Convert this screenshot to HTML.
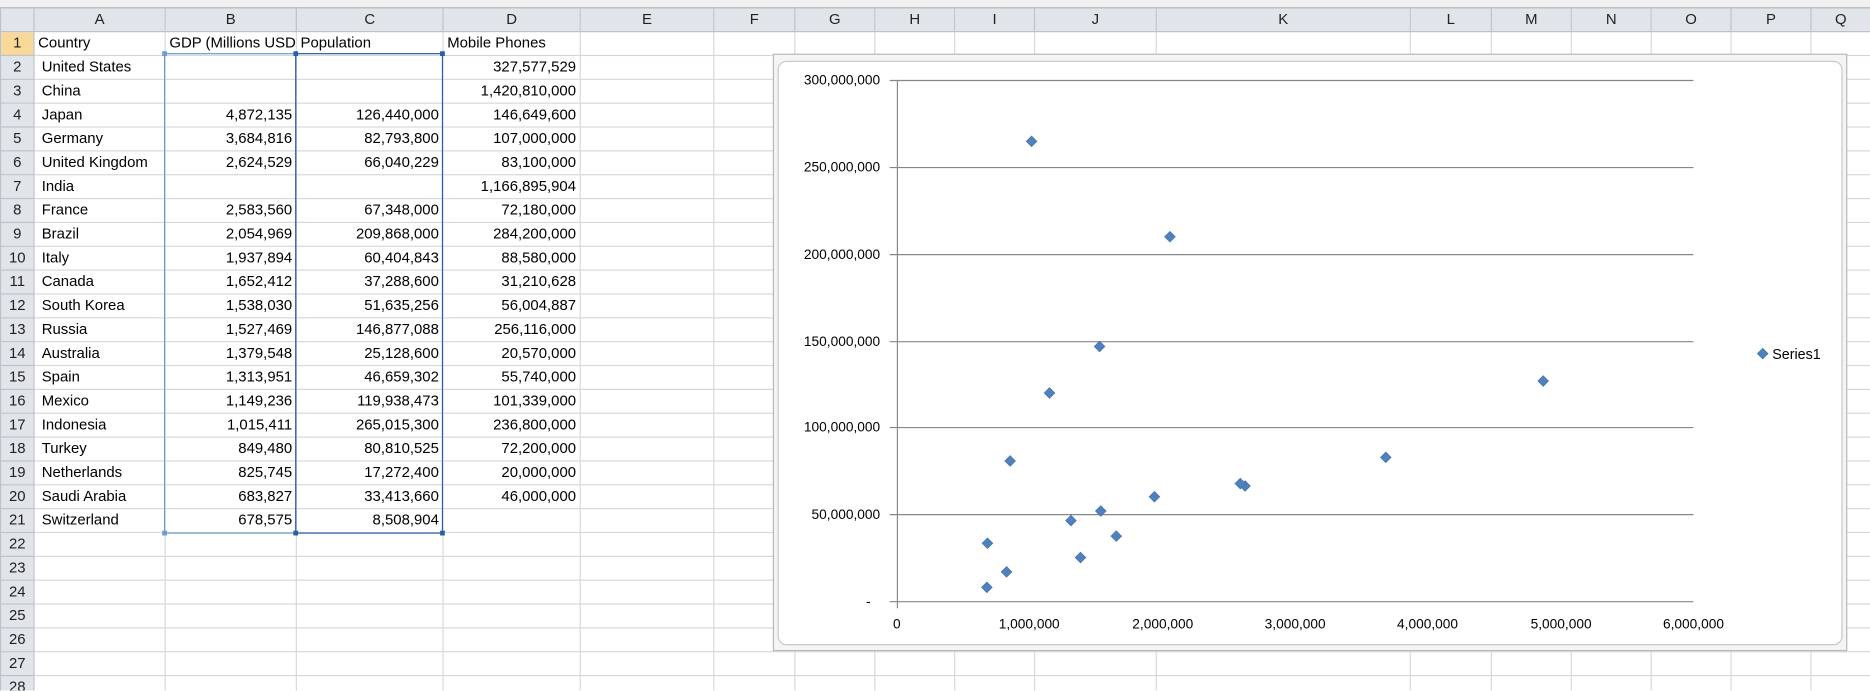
<!DOCTYPE html>
<html><head><meta charset="utf-8"><style>
html,body{margin:0;padding:0;width:1870px;height:690px;overflow:hidden;background:#fff}
#s{position:absolute;left:0;top:0;width:1568px;height:579px;overflow:hidden;transform:scale(1.19260);transform-origin:0 0;font-family:"Liberation Sans",sans-serif;font-size:12.5px;color:#000}
#top{position:absolute;left:0;top:0;width:1568px;height:6px;background:#f0f0f0;border-bottom:1px solid #9aa3ad}
table{position:absolute;left:0;top:6px;border-collapse:collapse;table-layout:fixed;width:1568px}
td{border:1px solid #d8d8d8;height:20px;padding:0 3px;white-space:nowrap;overflow:hidden;line-height:19px;box-sizing:border-box}
tr.h td{background:#e1e5ea;border-color:#bcc2c9;text-align:center;height:19px;color:#222}
td.r{background:#e1e5ea;border-color:#bcc2c9;text-align:center;color:#222;padding:0}
td.n{text-align:right}
td.a{padding-left:6px}
</style></head><body><div id="s">
<div id="top"></div>
<table>
<colgroup><col style="width:28px"><col style="width:110px"><col style="width:110px"><col style="width:123px"><col style="width:115px"><col style="width:112px"><col style="width:68px"><col style="width:67px"><col style="width:67px"><col style="width:67px"><col style="width:102px"><col style="width:213px"><col style="width:68px"><col style="width:67px"><col style="width:67px"><col style="width:67px"><col style="width:67px"><col style="width:50px"></colgroup>
<tr class="h"><td></td><td>A</td><td>B</td><td>C</td><td>D</td><td>E</td><td>F</td><td>G</td><td>H</td><td>I</td><td>J</td><td>K</td><td>L</td><td>M</td><td>N</td><td>O</td><td>P</td><td>Q</td></tr>
<tr><td class="r" style="background:#f9d99a">1</td><td>Country</td><td style="overflow:hidden">GDP (Millions USD</td><td>Population</td><td>Mobile Phones</td><td></td><td></td><td></td><td></td><td></td><td></td><td></td><td></td><td></td><td></td><td></td><td></td><td></td></tr>
<tr><td class="r">2</td><td class="a">United States</td><td></td><td></td><td class="n">327,577,529</td><td></td><td></td><td></td><td></td><td></td><td></td><td></td><td></td><td></td><td></td><td></td><td></td><td></td></tr>
<tr><td class="r">3</td><td class="a">China</td><td></td><td></td><td class="n">1,420,810,000</td><td></td><td></td><td></td><td></td><td></td><td></td><td></td><td></td><td></td><td></td><td></td><td></td><td></td></tr>
<tr><td class="r">4</td><td class="a">Japan</td><td class="n">4,872,135</td><td class="n">126,440,000</td><td class="n">146,649,600</td><td></td><td></td><td></td><td></td><td></td><td></td><td></td><td></td><td></td><td></td><td></td><td></td><td></td></tr>
<tr><td class="r">5</td><td class="a">Germany</td><td class="n">3,684,816</td><td class="n">82,793,800</td><td class="n">107,000,000</td><td></td><td></td><td></td><td></td><td></td><td></td><td></td><td></td><td></td><td></td><td></td><td></td><td></td></tr>
<tr><td class="r">6</td><td class="a">United Kingdom</td><td class="n">2,624,529</td><td class="n">66,040,229</td><td class="n">83,100,000</td><td></td><td></td><td></td><td></td><td></td><td></td><td></td><td></td><td></td><td></td><td></td><td></td><td></td></tr>
<tr><td class="r">7</td><td class="a">India</td><td></td><td></td><td class="n">1,166,895,904</td><td></td><td></td><td></td><td></td><td></td><td></td><td></td><td></td><td></td><td></td><td></td><td></td><td></td></tr>
<tr><td class="r">8</td><td class="a">France</td><td class="n">2,583,560</td><td class="n">67,348,000</td><td class="n">72,180,000</td><td></td><td></td><td></td><td></td><td></td><td></td><td></td><td></td><td></td><td></td><td></td><td></td><td></td></tr>
<tr><td class="r">9</td><td class="a">Brazil</td><td class="n">2,054,969</td><td class="n">209,868,000</td><td class="n">284,200,000</td><td></td><td></td><td></td><td></td><td></td><td></td><td></td><td></td><td></td><td></td><td></td><td></td><td></td></tr>
<tr><td class="r">10</td><td class="a">Italy</td><td class="n">1,937,894</td><td class="n">60,404,843</td><td class="n">88,580,000</td><td></td><td></td><td></td><td></td><td></td><td></td><td></td><td></td><td></td><td></td><td></td><td></td><td></td></tr>
<tr><td class="r">11</td><td class="a">Canada</td><td class="n">1,652,412</td><td class="n">37,288,600</td><td class="n">31,210,628</td><td></td><td></td><td></td><td></td><td></td><td></td><td></td><td></td><td></td><td></td><td></td><td></td><td></td></tr>
<tr><td class="r">12</td><td class="a">South Korea</td><td class="n">1,538,030</td><td class="n">51,635,256</td><td class="n">56,004,887</td><td></td><td></td><td></td><td></td><td></td><td></td><td></td><td></td><td></td><td></td><td></td><td></td><td></td></tr>
<tr><td class="r">13</td><td class="a">Russia</td><td class="n">1,527,469</td><td class="n">146,877,088</td><td class="n">256,116,000</td><td></td><td></td><td></td><td></td><td></td><td></td><td></td><td></td><td></td><td></td><td></td><td></td><td></td></tr>
<tr><td class="r">14</td><td class="a">Australia</td><td class="n">1,379,548</td><td class="n">25,128,600</td><td class="n">20,570,000</td><td></td><td></td><td></td><td></td><td></td><td></td><td></td><td></td><td></td><td></td><td></td><td></td><td></td></tr>
<tr><td class="r">15</td><td class="a">Spain</td><td class="n">1,313,951</td><td class="n">46,659,302</td><td class="n">55,740,000</td><td></td><td></td><td></td><td></td><td></td><td></td><td></td><td></td><td></td><td></td><td></td><td></td><td></td></tr>
<tr><td class="r">16</td><td class="a">Mexico</td><td class="n">1,149,236</td><td class="n">119,938,473</td><td class="n">101,339,000</td><td></td><td></td><td></td><td></td><td></td><td></td><td></td><td></td><td></td><td></td><td></td><td></td><td></td></tr>
<tr><td class="r">17</td><td class="a">Indonesia</td><td class="n">1,015,411</td><td class="n">265,015,300</td><td class="n">236,800,000</td><td></td><td></td><td></td><td></td><td></td><td></td><td></td><td></td><td></td><td></td><td></td><td></td><td></td></tr>
<tr><td class="r">18</td><td class="a">Turkey</td><td class="n">849,480</td><td class="n">80,810,525</td><td class="n">72,200,000</td><td></td><td></td><td></td><td></td><td></td><td></td><td></td><td></td><td></td><td></td><td></td><td></td><td></td></tr>
<tr><td class="r">19</td><td class="a">Netherlands</td><td class="n">825,745</td><td class="n">17,272,400</td><td class="n">20,000,000</td><td></td><td></td><td></td><td></td><td></td><td></td><td></td><td></td><td></td><td></td><td></td><td></td><td></td></tr>
<tr><td class="r">20</td><td class="a">Saudi Arabia</td><td class="n">683,827</td><td class="n">33,413,660</td><td class="n">46,000,000</td><td></td><td></td><td></td><td></td><td></td><td></td><td></td><td></td><td></td><td></td><td></td><td></td><td></td></tr>
<tr><td class="r">21</td><td class="a">Switzerland</td><td class="n">678,575</td><td class="n">8,508,904</td><td></td><td></td><td></td><td></td><td></td><td></td><td></td><td></td><td></td><td></td><td></td><td></td><td></td><td></td></tr>
<tr><td class="r">22</td><td></td><td></td><td></td><td></td><td></td><td></td><td></td><td></td><td></td><td></td><td></td><td></td><td></td><td></td><td></td><td></td><td></td></tr>
<tr><td class="r">23</td><td></td><td></td><td></td><td></td><td></td><td></td><td></td><td></td><td></td><td></td><td></td><td></td><td></td><td></td><td></td><td></td><td></td></tr>
<tr><td class="r">24</td><td></td><td></td><td></td><td></td><td></td><td></td><td></td><td></td><td></td><td></td><td></td><td></td><td></td><td></td><td></td><td></td><td></td></tr>
<tr><td class="r">25</td><td></td><td></td><td></td><td></td><td></td><td></td><td></td><td></td><td></td><td></td><td></td><td></td><td></td><td></td><td></td><td></td><td></td></tr>
<tr><td class="r">26</td><td></td><td></td><td></td><td></td><td></td><td></td><td></td><td></td><td></td><td></td><td></td><td></td><td></td><td></td><td></td><td></td><td></td></tr>
<tr><td class="r">27</td><td></td><td></td><td></td><td></td><td></td><td></td><td></td><td></td><td></td><td></td><td></td><td></td><td></td><td></td><td></td><td></td><td></td></tr>
<tr><td class="r">28</td><td></td><td></td><td></td><td></td><td></td><td></td><td></td><td></td><td></td><td></td><td></td><td></td><td></td><td></td><td></td><td></td><td></td></tr>
</table>
<svg style="position:absolute;left:0;top:0" width="1568" height="579">
<rect x="138" y="45" width="110" height="402" fill="none" stroke="#6f9bd1" stroke-width="1"/>
<rect x="248" y="45" width="123" height="402" fill="none" stroke="#2a5ea8" stroke-width="1"/>
<g fill="#2a5ea8"><rect x="136" y="43" width="4" height="4" fill="#6f9bd1"/><rect x="246" y="43" width="4" height="4"/><rect x="369" y="43" width="4" height="4"/><rect x="136" y="445" width="4" height="4" fill="#6f9bd1"/><rect x="246" y="445" width="4" height="4"/><rect x="369" y="445" width="4" height="4"/></g>
<rect x="648.5" y="45.5" width="900" height="500" fill="#f4f4f4" stroke="#b8b8b8"/>
<rect x="652.5" y="51.5" width="892" height="489" rx="7" fill="#fff" stroke="#c8c8c8"/>
<g stroke="#878787" stroke-width="1">
<line x1="746" y1="67.5" x2="1420" y2="67.5"/><line x1="746" y1="140.5" x2="1420" y2="140.5"/><line x1="746" y1="213.5" x2="1420" y2="213.5"/><line x1="746" y1="286.5" x2="1420" y2="286.5"/><line x1="746" y1="358.5" x2="1420" y2="358.5"/><line x1="746" y1="431.5" x2="1420" y2="431.5"/><line x1="746" y1="504.5" x2="1420" y2="504.5"/>
<line x1="752.5" y1="67" x2="752.5" y2="510"/>
</g>
<g font-family="Liberation Sans, sans-serif" font-size="11.5" text-anchor="end" fill="#000">
<text x="738" y="71">300,000,000</text><text x="738" y="144">250,000,000</text><text x="738" y="217">200,000,000</text><text x="738" y="290">150,000,000</text><text x="738" y="362">100,000,000</text><text x="738" y="435">50,000,000</text><text x="730" y="508">-</text>
</g>
<g font-family="Liberation Sans, sans-serif" font-size="11.5" text-anchor="middle" fill="#000">
<text x="752" y="527">0</text><text x="863" y="527">1,000,000</text><text x="975" y="527">2,000,000</text><text x="1086" y="527">3,000,000</text><text x="1197" y="527">4,000,000</text><text x="1309" y="527">5,000,000</text><text x="1420" y="527">6,000,000</text>
</g>
<g fill="#4f81bd" stroke="#3f6fa8" stroke-width="0.5">
<path d="M1294,315l4.5,4.5l-4.5,4.5l-4.5,-4.5z"/>
<path d="M1162,379l4.5,4.5l-4.5,4.5l-4.5,-4.5z"/>
<path d="M1044,403l4.5,4.5l-4.5,4.5l-4.5,-4.5z"/>
<path d="M1040,401l4.5,4.5l-4.5,4.5l-4.5,-4.5z"/>
<path d="M981,194l4.5,4.5l-4.5,4.5l-4.5,-4.5z"/>
<path d="M968,412l4.5,4.5l-4.5,4.5l-4.5,-4.5z"/>
<path d="M936,445l4.5,4.5l-4.5,4.5l-4.5,-4.5z"/>
<path d="M923,424l4.5,4.5l-4.5,4.5l-4.5,-4.5z"/>
<path d="M922,286l4.5,4.5l-4.5,4.5l-4.5,-4.5z"/>
<path d="M906,463l4.5,4.5l-4.5,4.5l-4.5,-4.5z"/>
<path d="M898,432l4.5,4.5l-4.5,4.5l-4.5,-4.5z"/>
<path d="M880,325l4.5,4.5l-4.5,4.5l-4.5,-4.5z"/>
<path d="M865,114l4.5,4.5l-4.5,4.5l-4.5,-4.5z"/>
<path d="M847,382l4.5,4.5l-4.5,4.5l-4.5,-4.5z"/>
<path d="M844,475l4.5,4.5l-4.5,4.5l-4.5,-4.5z"/>
<path d="M828,451l4.5,4.5l-4.5,4.5l-4.5,-4.5z"/>
<path d="M827.5,488l4.5,4.5l-4.5,4.5l-4.5,-4.5z"/>
<path d="M1478,292l4.5,4.5l-4.5,4.5l-4.5,-4.5z"/>
</g>
<text x="1486" y="301" font-family="Liberation Sans, sans-serif" font-size="12">Series1</text>
</svg>
</div></body></html>
